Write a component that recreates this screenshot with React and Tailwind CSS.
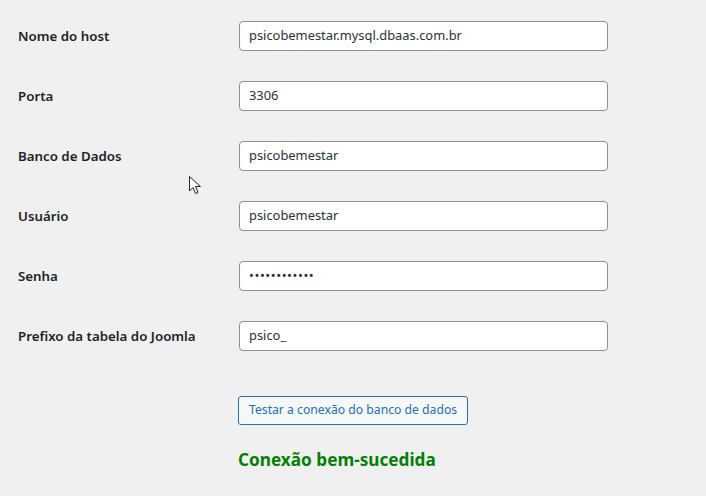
import React from "react";

const fields = [
  { label: "Nome do host", value: "psicobemestar.mysql.dbaas.com.br" },
  { label: "Porta", value: "3306" },
  { label: "Banco de Dados", value: "psicobemestar" },
  { label: "Usuário", value: "psicobemestar" },
  { label: "Senha", value: "••••••••••••", password: true },
  { label: "Prefixo da tabela do Joomla", value: "psico_" },
];

const App = () => {
  return (
    <div
      className="relative w-[706px] h-[496px] bg-[#f0f0f1] overflow-hidden text-[#1d2327]"
      style={{ fontFamily: '"Noto Sans", "Open Sans", sans-serif' }}
    >
      <div className="pt-[21px] pl-[18px]">
        {fields.map((f) => (
          <div key={f.label} className="flex h-[60px] items-start">
            <div className="w-[221px] h-[30px] pt-[1px] flex items-center text-[13.3px] font-semibold">
              {f.label}
            </div>
            <div
              className={
                "w-[369px] h-[30px] flex items-center px-[9px] bg-white border border-[#8c8f94] rounded-[4px] text-[#2c3338] " +
                (f.password ? "text-[13px] tracking-[0.55px]" : "text-[12.9px]")
              }
            >
              {f.value}
            </div>
          </div>
        ))}

        <div className="pl-[220px] mt-[15px]">
          <button className="h-[29px] px-[10px] border border-[#2271b1] rounded-[3px] bg-[#f6f7f7] text-[#2271b1] text-[12.2px]">
            Testar a conexão do banco de dados
          </button>
          <div className="mt-[22px] text-[17.2px] font-bold text-[#008000]">
            Conexão bem-sucedida
          </div>
        </div>
      </div>

      {/* mouse cursor */}
      <svg
        className="absolute left-[189px] top-[176px]"
        width="14"
        height="20"
        viewBox="0 0 14 20"
      >
        <path
          d="M0.5 0.5 L0.5 15 L4 11.5 L6.5 17.5 L9 16.5 L6.5 10.5 L11.5 10.5 Z"
          fill="white"
          stroke="#222"
          strokeWidth="1"
          strokeLinejoin="round"
        />
      </svg>
    </div>
  );
};

export default App;
